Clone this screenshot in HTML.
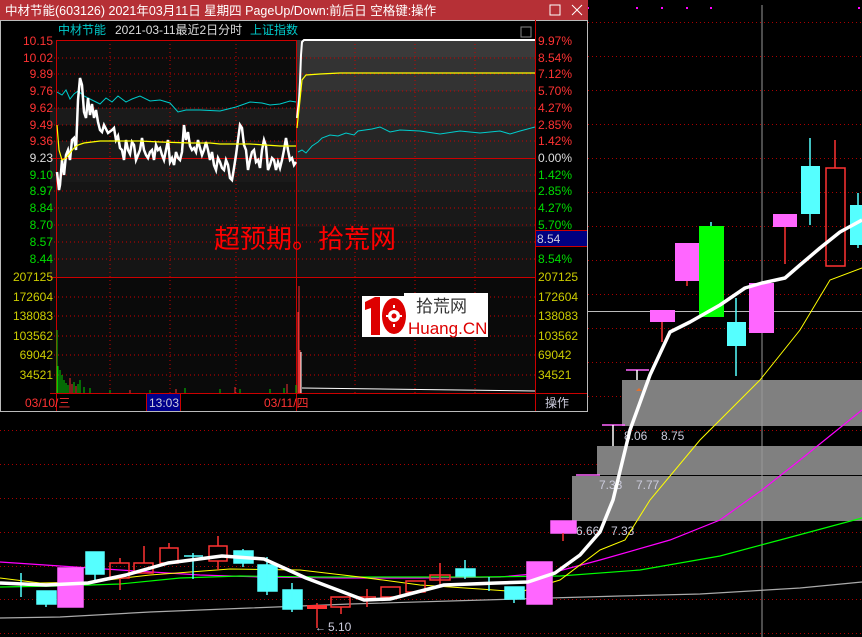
<!DOCTYPE html>
<html><head><meta charset="utf-8"><style>
html,body{margin:0;padding:0;background:#000;width:862px;height:637px;overflow:hidden;font-family:"Liberation Sans","Noto Sans CJK SC",sans-serif}
svg{position:absolute;left:0;top:0}
</style></head><body>
<svg width="862" height="637" viewBox="0 0 862 637" xmlns="http://www.w3.org/2000/svg" font-family="Liberation Sans, Noto Sans CJK SC, sans-serif">
<rect width="862" height="637" fill="#000"/>
<g stroke="#a00" stroke-width="1" stroke-dasharray="1,3">
<line x1="588" y1="22.5" x2="862" y2="22.5"/><line x1="588" y1="56.5" x2="862" y2="56.5"/><line x1="588" y1="90.5" x2="862" y2="90.5"/>
<line x1="588" y1="124.5" x2="862" y2="124.5"/><line x1="588" y1="158.5" x2="862" y2="158.5"/><line x1="588" y1="192.5" x2="862" y2="192.5"/>
<line x1="588" y1="226.5" x2="862" y2="226.5"/><line x1="588" y1="260.5" x2="862" y2="260.5"/><line x1="588" y1="294.5" x2="862" y2="294.5"/>
<line x1="588" y1="328.5" x2="862" y2="328.5"/><line x1="588" y1="362.5" x2="862" y2="362.5"/><line x1="588" y1="396.5" x2="862" y2="396.5"/>
<line x1="0" y1="430.5" x2="862" y2="430.5"/><line x1="0" y1="464.5" x2="862" y2="464.5"/><line x1="0" y1="498.5" x2="862" y2="498.5"/>
<line x1="0" y1="532.5" x2="862" y2="532.5"/><line x1="0" y1="566.5" x2="862" y2="566.5"/><line x1="0" y1="599.5" x2="862" y2="599.5"/><line x1="0" y1="633.5" x2="862" y2="633.5"/>
</g>
<g fill="#f0f"><rect x="587" y="7" width="2" height="2"/><rect x="636" y="7" width="2" height="2"/><rect x="661" y="7" width="2" height="2"/><rect x="686" y="7" width="2" height="2"/><rect x="710" y="7" width="2" height="2"/><rect x="858" y="7" width="2" height="2"/></g>
<rect x="622" y="380" width="240" height="46" fill="#808080"/>
<rect x="597" y="446" width="265" height="29" fill="#808080"/>
<rect x="572" y="476" width="290" height="45" fill="#808080"/>
<line x1="572" y1="475.5" x2="862" y2="475.5" stroke="#000"/>
<g fill="#ccd" font-size="12"><text x="624" y="440">8.06</text><text x="661" y="440">8.75</text><text x="599" y="489">7.33</text><text x="636" y="489">7.77</text><text x="576" y="535">6.66</text><text x="611" y="535">7.33</text><text x="328" y="631">5.10</text></g>
<text x="315" y="631" fill="#ccd" font-size="11">←</text>
<path d="M636 391l3-3 3 3z" fill="#e07030"/>
<g stroke="#fff" stroke-width="1.5"><line x1="626" y1="370" x2="649" y2="370" stroke="#f6f"/><line x1="637" y1="370" x2="637" y2="380"/><line x1="602" y1="425" x2="625" y2="425" stroke="#f6f"/><line x1="613" y1="425" x2="613" y2="446"/><line x1="576" y1="475" x2="600" y2="475" stroke="#f6f"/></g>
<line x1="762" y1="5" x2="762" y2="637" stroke="#999"/>
<line x1="587" y1="311.5" x2="862" y2="311.5" stroke="#bbb"/>
<polyline fill="none" stroke="#aaa" stroke-width="1.2" points="0,618 60,617 150,612 250,608 350,604 450,601 550,598 620,596 700,594 800,588 862,582"/>
<polyline fill="none" stroke="#f0f" stroke-width="1.2" points="0,562 60,566 120,570 200,575 260,577 340,578 420,578 500,577 555,572 600,560 670,540 720,520 762,490 800,460 862,410"/>
<polyline fill="none" stroke="#0f0" stroke-width="1.2" points="0,587 60,586 120,584 180,578 240,576 320,577 400,577 480,577 560,576 640,570 720,556 780,540 862,518"/>
<polyline fill="none" stroke="#ff0" stroke-width="1" points="0,578 40,583 90,582 150,575 230,569 300,570 360,577 420,585 480,589 520,592 560,580 600,550 625,540 650,500 700,440 760,380 800,330 830,280 862,268"/>
<g stroke-width="1.5">
<g fill="#5ff" stroke="#5ff"><line x1="21" y1="573" x2="21" y2="597"/><rect x="37" y="591" width="19" height="13"/><line x1="46" y1="604" x2="46" y2="607"/>
<rect x="86" y="552" width="18" height="22"/><line x1="95" y1="574" x2="95" y2="583"/>
<line x1="184" y1="556" x2="203" y2="556"/><line x1="193" y1="553" x2="193" y2="579"/>
<rect x="234" y="551" width="19" height="12"/><line x1="243" y1="549" x2="243" y2="567"/>
<rect x="258" y="565" width="19" height="26"/><line x1="267" y1="557" x2="267" y2="595"/>
<rect x="283" y="590" width="19" height="19"/><line x1="292" y1="583" x2="292" y2="612"/>
<rect x="456" y="569" width="19" height="7"/><line x1="465" y1="560" x2="465" y2="579"/>
<line x1="480" y1="583" x2="499" y2="583"/><line x1="489" y1="577" x2="489" y2="591"/>
<rect x="505" y="587" width="19" height="12"/><line x1="514" y1="599" x2="514" y2="603"/></g>
<g fill="#f6f" stroke="#f6f"><rect x="58" y="568" width="25" height="39"/><rect x="527" y="562" width="25" height="42"/><rect x="551" y="521" width="25" height="12"/></g>
<g fill="none" stroke="#f33"><rect x="110" y="563" width="19" height="15"/><line x1="120" y1="558" x2="120" y2="563"/><line x1="120" y1="578" x2="120" y2="590"/>
<rect x="134" y="563" width="19" height="10"/><line x1="144" y1="546" x2="144" y2="563"/>
<rect x="160" y="548" width="18" height="15"/><line x1="169" y1="543" x2="169" y2="548"/>
<rect x="209" y="546" width="18" height="15"/><line x1="218" y1="536" x2="218" y2="546"/><line x1="218" y1="561" x2="218" y2="570"/>
<rect x="331" y="597" width="19" height="10"/><line x1="341" y1="607" x2="341" y2="614"/>
<line x1="358" y1="597" x2="376" y2="597"/><line x1="367" y1="589" x2="367" y2="607"/>
<rect x="381" y="587" width="19" height="10"/><rect x="406" y="581" width="19" height="11"/>
<rect x="430" y="575" width="20" height="5"/><line x1="440" y1="563" x2="440" y2="587"/>
<line x1="563" y1="533" x2="563" y2="541"/></g>
<rect x="307" y="605" width="20" height="4" fill="#f33"/><line x1="317" y1="603" x2="317" y2="628" stroke="#f33"/>
</g>
<g stroke-width="1.5">
<rect x="650" y="310" width="25" height="12" fill="#f6f"/><line x1="662" y1="322" x2="662" y2="342" stroke="#f33"/>
<rect x="675" y="243" width="24" height="38" fill="#f6f"/><line x1="687" y1="281" x2="687" y2="286" stroke="#f33"/>
<rect x="699" y="226" width="25" height="91" fill="#0f0"/><line x1="711" y1="222" x2="711" y2="226" stroke="#5ff"/>
<line x1="736" y1="298" x2="736" y2="376" stroke="#5ff"/><rect x="727" y="322" width="19" height="24" fill="#5ff"/>
<rect x="749" y="283" width="25" height="50" fill="#f6f"/>
<rect x="773" y="214" width="24" height="13" fill="#f6f"/><line x1="785" y1="227" x2="785" y2="264" stroke="#f33"/>
<line x1="810" y1="138" x2="810" y2="225" stroke="#5ff"/><rect x="801" y="166" width="19" height="48" fill="#5ff"/>
<line x1="835" y1="140" x2="835" y2="168" stroke="#f33"/><rect x="826" y="168" width="19" height="98" fill="none" stroke="#f33"/>
<line x1="858" y1="193" x2="858" y2="248" stroke="#5ff"/><rect x="850" y="205" width="12" height="40" fill="#5ff"/>
</g>
<polyline fill="none" stroke="#fff" stroke-width="3.5" stroke-linejoin="round" points="0,583 46,585 88,583 126,575 168,563 222,556 264,559 306,578 364,600 390,599 444,585 497,583 528,582 555,573 580,555 600,532 613,500 630,430 650,375 670,332 690,322 720,305 745,288 762,283 785,278 800,265 820,248 840,232 862,220"/>

<rect x="0" y="0" width="588" height="412" fill="#000"/>
<rect x="0" y="0" width="588" height="20" fill="#b63036"/>
<text x="5" y="15" fill="#fff" font-size="12.5">中材节能(603126) 2021年03月11日 星期四 PageUp/Down:前后日 空格键:操作</text>
<rect x="550" y="5" width="10" height="10" fill="none" stroke="#fff"/>
<path d="M572 5l10 10M582 5l-10 10" stroke="#fff"/>
<rect x="0.5" y="20.5" width="587" height="391" fill="none" stroke="#bbb"/>
<text x="58" y="34" fill="#0cc" font-size="12">中材节能</text>
<text x="115" y="34" fill="#ddd" font-size="12">2021-03-11最近2日分时</text>
<text x="250" y="34" fill="#0cc" font-size="12">上证指数</text>
<rect x="521" y="27" width="10" height="10" fill="none" stroke="#888"/>
<rect x="50" y="40" width="485" height="237" fill="#0c0c0c"/>
<g fill="#1a1a1a"><rect x="50" y="108" width="247" height="17"/><rect x="50" y="141" width="247" height="17"/><rect x="50" y="158" width="247" height="24"/></g>
<g><rect x="297" y="40" width="238" height="17" fill="#3a3a3a"/><rect x="297" y="57" width="238" height="34" fill="#333"/><rect x="297" y="91" width="238" height="34" fill="#2c2c2c"/><rect x="297" y="125" width="238" height="33" fill="#262626"/><rect x="297" y="158" width="238" height="34" fill="#202020"/><rect x="297" y="192" width="238" height="35" fill="#191919"/><rect x="297" y="227" width="238" height="50" fill="#141414"/></g>
<rect x="50" y="182" width="247" height="95" fill="#151515"/>
<rect x="50" y="277" width="485" height="117" fill="#0a0a0a"/>
<g stroke="#c00" stroke-dasharray="1,3">
<line x1="50" y1="58" x2="535" y2="58"/><line x1="50" y1="74" x2="535" y2="74"/><line x1="50" y1="91" x2="535" y2="91"/><line x1="50" y1="108" x2="535" y2="108"/><line x1="50" y1="125" x2="535" y2="125"/><line x1="50" y1="141" x2="535" y2="141"/><line x1="50" y1="175" x2="535" y2="175"/><line x1="50" y1="191" x2="535" y2="191"/><line x1="50" y1="208" x2="535" y2="208"/><line x1="50" y1="225" x2="535" y2="225"/><line x1="50" y1="242" x2="535" y2="242"/><line x1="50" y1="259" x2="535" y2="259"/>
<line x1="50" y1="297" x2="535" y2="297"/><line x1="50" y1="316" x2="535" y2="316"/><line x1="50" y1="336" x2="535" y2="336"/><line x1="50" y1="355" x2="535" y2="355"/><line x1="50" y1="375" x2="535" y2="375"/>
<line x1="110" y1="40" x2="110" y2="393"/><line x1="170" y1="40" x2="170" y2="393"/><line x1="236" y1="40" x2="236" y2="393"/><line x1="355" y1="40" x2="355" y2="393"/><line x1="415" y1="40" x2="415" y2="393"/><line x1="475" y1="40" x2="475" y2="393"/>
</g>
<g stroke="#c00"><line x1="56" y1="40.5" x2="297" y2="40.5"/><line x1="50" y1="158.5" x2="535" y2="158.5"/><line x1="50" y1="277.5" x2="535" y2="277.5"/><line x1="50" y1="393.5" x2="587" y2="393.5"/><line x1="56.5" y1="40" x2="56.5" y2="411"/><line x1="535.5" y1="20" x2="535.5" y2="411"/><line x1="296.5" y1="40" x2="296.5" y2="411"/></g>
<g font-size="12" text-anchor="end">
<g fill="#f33"><text x="53" y="45">10.15</text><text x="53" y="62">10.02</text><text x="53" y="78">9.89</text><text x="53" y="95">9.76</text><text x="53" y="112">9.62</text><text x="53" y="129">9.49</text><text x="53" y="145">9.36</text></g>
<text x="53" y="162" fill="#ddd">9.23</text>
<g fill="#0d0"><text x="53" y="179">9.10</text><text x="53" y="195">8.97</text><text x="53" y="212">8.84</text><text x="53" y="229">8.70</text><text x="53" y="246">8.57</text><text x="53" y="263">8.44</text></g>
<g fill="#cc0"><text x="53" y="281">207125</text><text x="53" y="301">172604</text><text x="53" y="320">138083</text><text x="53" y="340">103562</text><text x="53" y="359">69042</text><text x="53" y="379">34521</text></g>
</g>
<g font-size="12">
<g fill="#f33"><text x="538" y="45">9.97%</text><text x="538" y="62">8.54%</text><text x="538" y="78">7.12%</text><text x="538" y="95">5.70%</text><text x="538" y="112">4.27%</text><text x="538" y="129">2.85%</text><text x="538" y="145">1.42%</text></g>
<text x="538" y="162" fill="#ddd">0.00%</text>
<g fill="#0d0"><text x="538" y="179">1.42%</text><text x="538" y="195">2.85%</text><text x="538" y="212">4.27%</text><text x="538" y="229">5.70%</text><text x="538" y="263">8.54%</text></g>
<g fill="#cc0"><text x="538" y="281">207125</text><text x="538" y="301">172604</text><text x="538" y="320">138083</text><text x="538" y="340">103562</text><text x="538" y="359">69042</text><text x="538" y="379">34521</text></g>
</g>
<rect x="536" y="231" width="51" height="15" fill="#000080"/><line x1="536" y1="230.5" x2="587" y2="230.5" stroke="#c00"/><line x1="536" y1="246.5" x2="587" y2="246.5" stroke="#c00"/>
<text x="537" y="243" fill="#ccd" font-size="12">8.54</text>
<polyline fill="none" stroke="#0cc" stroke-width="1" points="57,92 62,95 66,90 70,99 74,94 78,91 84,96 92,100 100,104 106,98 112,102 118,96 126,102 132,99 140,96 150,101 160,100 170,103 178,112 186,110 200,110 220,111 236,107 250,102 262,103 270,105 280,104 290,101 296,102"/>
<polyline fill="none" stroke="#0cc" stroke-width="1" points="298,152 302,150 306,153 312,146 318,142 322,138 330,135 338,136 346,133 354,135 358,131 372,129 380,127 390,132 400,130 420,131 440,134 460,131 480,133 500,131 510,134 520,131 535,127"/>
<polyline fill="none" stroke="#fff" stroke-width="2.5" points="57,172 59,190 60,185 62,160 64,175 66,155 68,150 70,160 72,140 74,138 76,150 78,100 80,78 82,85 84,112 86,118 88,98 90,115 92,104 94,118 96,110 98,122 100,130 102,132 104,125 108,133 112,130 114,128 116,140 118,136 120,148 122,150 124,160 126,140 128,150 130,154 132,142 134,145 136,160 138,155 140,150 142,138 144,150 146,155 148,158 150,152 152,150 154,160 156,145 158,150 160,148 162,155 164,160 166,150 168,140 170,162 172,158 174,165 176,152 178,158 180,160 182,152 184,125 186,140 188,132 190,146 192,150 194,148 196,152 198,140 200,148 202,155 204,150 206,142 208,150 210,160 212,152 214,165 216,170 218,158 220,162 222,168 224,170 226,160 228,165 230,178 232,180 234,168 236,155 238,140 240,125 242,128 244,145 246,150 248,170 250,160 252,152 254,150 256,162 258,160 260,168 262,150 264,140 266,146 268,170 270,165 272,158 274,160 276,170 278,162 280,168 282,160 284,150 286,138 288,150 290,160 292,158 294,165 296,162"/>
<polyline fill="none" stroke="#fff" stroke-width="2" points="297,118 299,100 300,82 301,55 302,42 304,40 535,40"/>
<polyline fill="none" stroke="#ff0" stroke-width="1.2" points="57,125 59,150 62,160 66,158 70,153 74,148 78,145 84,143 100,141 120,141 140,141 160,142 190,143 210,143 220,144 250,144 280,146 296,146"/>
<polyline fill="none" stroke="#ff0" stroke-width="1.2" points="297,128 300,100 302,80 306,75 320,74 340,73 535,73"/>
<g stroke="#0c0" stroke-width="1"><line x1="57" y1="330" x2="57" y2="393"/><line x1="58" y1="366" x2="58" y2="393"/><line x1="60" y1="370" x2="60" y2="393"/><line x1="62" y1="375" x2="62" y2="393"/><line x1="64" y1="380" x2="64" y2="393"/><line x1="66" y1="383" x2="66" y2="393"/><line x1="68" y1="385" x2="68" y2="393"/><line x1="74" y1="382" x2="74" y2="393"/><line x1="78" y1="384" x2="78" y2="393"/><line x1="80" y1="380" x2="80" y2="393"/><line x1="84" y1="387" x2="84" y2="393"/><line x1="90" y1="388" x2="90" y2="393"/><line x1="110" y1="390" x2="110" y2="393"/><line x1="150" y1="390" x2="150" y2="393"/><line x1="185" y1="388" x2="185" y2="393"/><line x1="220" y1="389" x2="220" y2="393"/><line x1="240" y1="389" x2="240" y2="393"/><line x1="270" y1="389" x2="270" y2="393"/><line x1="284" y1="388" x2="284" y2="393"/><line x1="296" y1="385" x2="296" y2="393"/></g>
<g stroke="#e33" stroke-width="1"><line x1="70" y1="378" x2="70" y2="393"/><line x1="72" y1="384" x2="72" y2="393"/><line x1="76" y1="386" x2="76" y2="393"/><line x1="130" y1="390" x2="130" y2="393"/><line x1="176" y1="389" x2="176" y2="393"/><line x1="235" y1="387" x2="235" y2="393"/><line x1="287" y1="384" x2="287" y2="393"/><line x1="298" y1="312" x2="298" y2="393"/><line x1="299" y1="286" x2="299" y2="393"/><line x1="300" y1="350" x2="300" y2="393"/></g>
<line x1="301" y1="352" x2="301" y2="393" stroke="#fff"/>
<line x1="302" y1="388" x2="535" y2="391" stroke="#fff"/>
<rect x="147" y="394" width="33" height="17" fill="#00008b"/>
<line x1="146.5" y1="394" x2="146.5" y2="411" stroke="#c00"/><line x1="180.5" y1="394" x2="180.5" y2="411" stroke="#c00"/>
<g font-size="12"><text x="25" y="407" fill="#f33">03/10/三</text><text x="149" y="407" fill="#ccd">13:03</text><text x="264" y="407" fill="#f33">03/11/四</text><text x="545" y="407" fill="#ccd">操作</text></g>
<text x="214" y="248" fill="#f00" font-size="26" font-family="Noto Sans CJK SC, sans-serif">超预期。拾荒网</text>
<path d="M362 296h44v41h-44z M404 293h84v44h-84z" fill="#fff"/>
<path d="M365 302l10-5h5v38h-9v-27l-6 2z" fill="#d00"/>
<ellipse cx="394" cy="316" rx="12" ry="18" fill="#d00"/>
<circle cx="394" cy="316" r="6" fill="#fff"/>
<circle cx="394" cy="316" r="2.5" fill="#d00"/>
<g stroke="#fff" stroke-width="2"><line x1="394" y1="305" x2="394" y2="308"/><line x1="394" y1="324" x2="394" y2="327"/><line x1="386" y1="316" x2="388" y2="316"/><line x1="400" y1="316" x2="402" y2="316"/></g>
<text x="416" y="312" fill="#333" font-size="17" font-family="Noto Sans CJK SC, sans-serif">拾荒网</text>
<text x="408" y="334" fill="#d00" font-size="17">Huang.CN</text>
</svg>
</body></html>
